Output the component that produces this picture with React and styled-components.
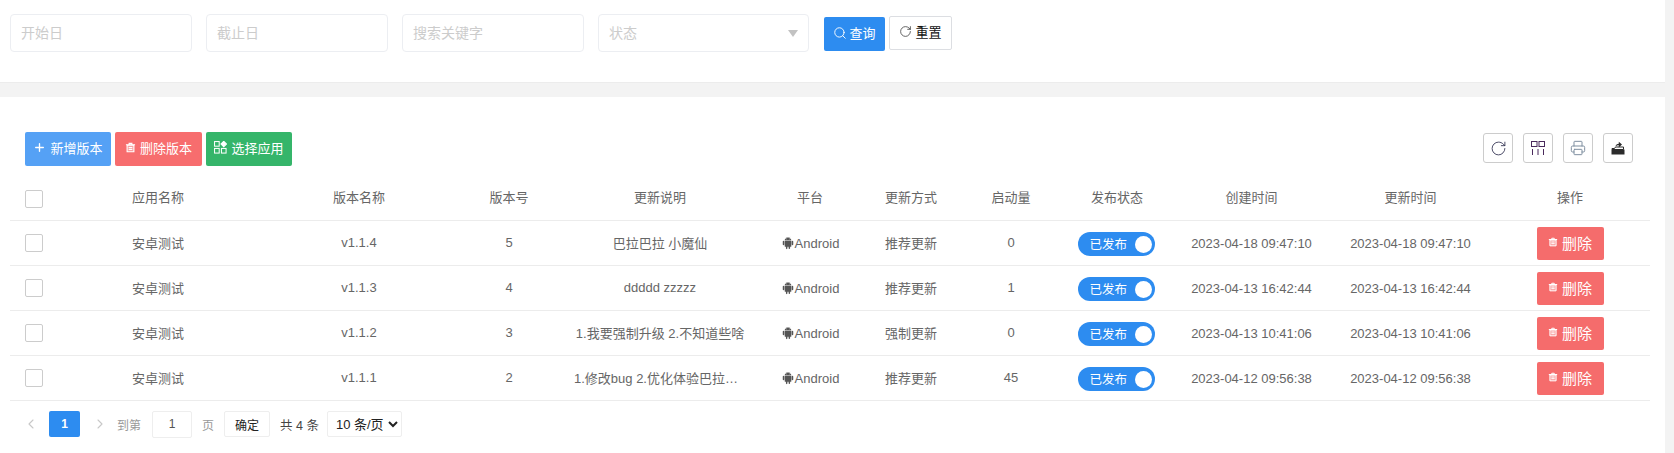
import React from "react";
import styled, { createGlobalStyle } from "styled-components";
import { AiFillAndroid } from "react-icons/ai";
import { Plus, RotateCw, Search, Printer, ChevronLeft, ChevronRight } from "lucide-react";

const GlobalStyle = createGlobalStyle`
  html, body {
    margin: 0;
    padding: 0;
    overflow: hidden;
    background: #f3f3f3;
    font-family: "Liberation Sans", "Noto Sans CJK SC", sans-serif;
    font-size: 13px;
    color: #666;
  }
  * { box-sizing: border-box; }
`;

const Page = styled.div`
  height: 453px;
  padding-right: 9px;
  overflow: hidden;
`;

const FilterPanel = styled.div`
  display: flex;
  align-items: flex-start;
  height: 83px;
  padding: 14px 10px 0;
  background: #fff;
  border-bottom: 1px solid #ececec;
`;

const FilterInput = styled.input`
  width: 182px;
  height: 38px;
  margin-right: 14px;
  padding: 0 10px;
  border: 1px solid #eceef2;
  border-radius: 4px;
  outline: none;
  font: 14px "Liberation Sans", "Noto Sans CJK SC", sans-serif;
  &::placeholder { color: #ccc; }
`;

const StatusSelect = styled.div`
  display: flex;
  align-items: center;
  justify-content: space-between;
  width: 211px;
  height: 38px;
  margin-right: 15px;
  padding: 0 10px 2px;
  border: 1px solid #eceef2;
  border-radius: 4px;
  font-size: 14px;
  color: #ccc;
`;

const Caret = styled.span`
  width: 0;
  height: 0;
  margin-top: 2px;
  border-left: 5.5px solid transparent;
  border-right: 5.5px solid transparent;
  border-top: 7px solid #c2c2c2;
`;

const QueryButton = styled.button`
  display: flex;
  align-items: center;
  justify-content: center;
  gap: 2px;
  width: 61px;
  height: 34px;
  margin: 3px 4px 0 0;
  padding: 0 0 3px;
  border: 0;
  border-radius: 2px;
  background: #2d8cf0;
  color: #fff;
  font: 13px "Liberation Sans", "Noto Sans CJK SC", sans-serif;
`;

const ResetButton = styled.button`
  display: flex;
  align-items: center;
  justify-content: center;
  gap: 3px;
  width: 63px;
  height: 34px;
  margin-top: 2px;
  padding: 0 0 3px;
  border: 1px solid #dcdee2;
  border-radius: 2px;
  background: #fff;
  color: #111;
  font: 13px "Liberation Sans", "Noto Sans CJK SC", sans-serif;
`;

const TablePanel = styled.div`
  height: 356px;
  margin-top: 14px;
  padding: 35px 15px 0 10px;
  background: #fff;
`;

const Toolbar = styled.div`
  display: flex;
  justify-content: space-between;
  padding: 0 17px 0 15px;
`;

const ActionGroup = styled.div`
  display: flex;
  gap: 4px;
`;

const ActionButton = styled.button`
  display: flex;
  align-items: center;
  justify-content: center;
  gap: 4px;
  width: ${(p) => p.$width}px;
  height: 34px;
  padding: 0 0 3px;
  border: 0;
  border-radius: 2px;
  background: ${(p) => p.$color};
  color: #fff;
  font: 13px "Liberation Sans", "Noto Sans CJK SC", sans-serif;
`;

const ToolGroup = styled.div`
  display: flex;
  gap: 10px;
  padding-top: 1px;
`;

const ToolButton = styled.button`
  display: flex;
  align-items: center;
  justify-content: center;
  width: 30px;
  height: 30px;
  padding: 0;
  border: 1px solid #ccc;
  border-radius: 3px;
  background: #fff;
  color: ${(p) => p.$color || "#333"};
`;

const columns = "48px 200px 202px 98px 204px 96px 106px 94px 118px 151px 167px 152px";

const Row = styled.div`
  display: grid;
  grid-template-columns: ${columns};
  align-items: center;
  height: 45px;
  padding-right: 4px;
  border-bottom: 1px solid #ececec;
  text-align: center;
  color: #666;
`;

const HeadRow = styled(Row)`
  height: 55px;
  padding-top: 12px;
`;

const CheckCell = styled.div`
  padding-left: 15px;
`;

const Checkbox = styled.span`
  display: block;
  width: 18px;
  height: 18px;
  border: 1px solid #ccc;
  border-radius: 2px;
  background: #fff;
`;

const Cell = styled.div`
  padding: 0 16px 2px;
  white-space: nowrap;
  overflow: hidden;
  text-overflow: ellipsis;
`;

const HeadCell = styled(Cell)`
  padding-bottom: 5px;
`;

const DateCell = styled.div`
  white-space: nowrap;
`;

const Platform = styled.div`
  display: flex;
  align-items: center;
  justify-content: center;
  color: #666;
`;

const SwitchCell = styled.div`
  display: flex;
  justify-content: center;
  padding-right: 2px;
`;

const Toggle = styled.div`
  display: flex;
  align-items: center;
  justify-content: space-between;
  width: 77px;
  height: 24px;
  margin-top: 2px;
  padding: 0 3px 0 12px;
  border-radius: 12px;
  background: #2d8cf0;
  color: #fff;
  font-size: 12.5px;
`;

const ToggleLabel = styled.span`
  padding-bottom: 2px;
`;

const Knob = styled.span`
  width: 17px;
  height: 17px;
  border-radius: 50%;
  background: #fff;
`;

const OpCell = styled.div`
  display: flex;
  justify-content: center;
`;

const DeleteButton = styled.button`
  display: flex;
  align-items: center;
  justify-content: center;
  gap: 4px;
  width: 67px;
  height: 33px;
  padding: 0 0 2px;
  border: 0;
  border-radius: 2px;
  background: #f56c6c;
  color: #fff;
  font: 15px "Liberation Sans", "Noto Sans CJK SC", sans-serif;
`;

const Pager = styled.div`
  display: flex;
  align-items: center;
  height: 26px;
  margin-top: 10px;
  padding-left: 13px;
  font-size: 12px;
  color: #999;
`;

const PageArrow = styled.span`
  display: flex;
  justify-content: center;
  width: 16px;
  color: #c8c8c8;
  margin: ${(p) => p.$margin};
`;

const PageNumber = styled.span`
  display: flex;
  align-items: center;
  justify-content: center;
  width: 31px;
  height: 26px;
  border-radius: 2px;
  background: #2d8cf0;
  color: #fff;
  font-weight: bold;
`;

const PagerText = styled.span`
  color: ${(p) => p.$color || "#999"};
  font-size: ${(p) => p.$size || 12}px;
`;

const PageInput = styled.input`
  width: 40px;
  height: 27px;
  margin: 0 10px 0 11px;
  border: 1px solid #eee;
  border-radius: 2px;
  outline: none;
  text-align: center;
  color: #555;
  font: 12px "Liberation Sans", "Noto Sans CJK SC", sans-serif;
`;

const ConfirmButton = styled.button`
  width: 46px;
  height: 26px;
  margin: 0 10px;
  padding: 0;
  border: 1px solid #eee;
  border-radius: 2px;
  background: #fff;
  color: #222;
  font: 12px "Liberation Sans", "Noto Sans CJK SC", sans-serif;
`;

const SizeSelect = styled.select`
  width: 75px;
  height: 26px;
  margin-left: 8px;
  padding: 0 0 0 4px;
  border: 1px solid #eee;
  border-radius: 2px;
  outline: none;
  background: #fff;
  color: #222;
  font: 13px "Liberation Sans", "Noto Sans CJK SC", sans-serif;
`;

const TrashIcon = ({ size = 12 }) => (
  <svg width={size} height={size} viewBox="0 0 12 12" fill="none" stroke="currentColor" strokeWidth="1.2">
    <path d="M1 3h10M4.500 3V1.500h3V3" />
    <path d="M2.300 3.600h7.400v7H2.300z" fill="currentColor" fillOpacity="0.35" />
    <path d="M4 6h4M4 8h4" />
  </svg>
);

const AppsIcon = () => (
  <svg width="13" height="13" viewBox="0 0 14 14" fill="none" stroke="currentColor" strokeWidth="1.1">
    <rect x="0.600" y="0.600" width="5" height="5" />
    <rect x="0.600" y="8" width="5" height="5" />
    <rect x="8" y="8" width="5" height="5" />
    <path d="M10.500 0.300l3 3-3 3-3-3z" fill="currentColor" />
  </svg>
);

const ColumnsIcon = () => (
  <svg width="14" height="14" viewBox="0 0 14 14" fill="none" stroke="#4a2a5c" strokeWidth="1">
    <rect x="0.500" y="0.500" width="5.500" height="5" />
    <rect x="8" y="0.500" width="5.500" height="5" />
    <path d="M1.500 8v6M7 8v6M12.500 8v6" />
  </svg>
);

const ExportIcon = () => (
  <svg width="14" height="14" viewBox="0 0 14 14">
    <path d="M1 7.500h2.500l1-1.500h8v2.500H1z" fill="none" stroke="#2b2b2b" strokeWidth="1" />
    <path d="M0.500 8.500h13v5h-13z" fill="#2b2b2b" />
    <path d="M4.500 5.500C4.800 3.800 6 2.900 7.800 2.800V0.800l3.200 2.800-3.200 2.800V4.300C6.400 4.300 5.400 4.700 4.500 5.500z" fill="#2b2b2b" />
  </svg>
);

const rows = [
  { name: "v1.1.4", no: 5, note: "巴拉巴拉 小魔仙", mode: "推荐更新", count: 0, time: "2023-04-18 09:47:10" },
  { name: "v1.1.3", no: 4, note: "ddddd zzzzz", mode: "推荐更新", count: 1, time: "2023-04-13 16:42:44" },
  { name: "v1.1.2", no: 3, note: "1.我要强制升级 2.不知道些啥", mode: "强制更新", count: 0, time: "2023-04-13 10:41:06" },
  { name: "v1.1.1", no: 2, note: "1.修改bug 2.优化体验巴拉巴拉巴拉", mode: "推荐更新", count: 45, time: "2023-04-12 09:56:38" },
];

const heads = ["应用名称", "版本名称", "版本号", "更新说明", "平台", "更新方式", "启动量", "发布状态", "创建时间", "更新时间", "操作"];

export default function App() {
  return (
    <Page>
      <GlobalStyle />
      <FilterPanel>
        <FilterInput placeholder="开始日" />
        <FilterInput placeholder="截止日" />
        <FilterInput placeholder="搜索关键字" />
        <StatusSelect>
          状态
          <Caret />
        </StatusSelect>
        <QueryButton>
          <Search size={14} strokeWidth={1.6} />
          查询
        </QueryButton>
        <ResetButton>
          <RotateCw size={13} strokeWidth={1.5} color="#444" />
          重置
        </ResetButton>
      </FilterPanel>

      <TablePanel>
        <Toolbar>
          <ActionGroup>
            <ActionButton $width={86} $color="#55a1f5">
              <Plus size={13} strokeWidth={2.5} />
              新增版本
            </ActionButton>
            <ActionButton $width={87} $color="#f76d6e">
              <TrashIcon size={11} />
              删除版本
            </ActionButton>
            <ActionButton $width={86} $color="#35b56a">
              <AppsIcon />
              选择应用
            </ActionButton>
          </ActionGroup>
          <ToolGroup>
            <ToolButton><RotateCw size={17} strokeWidth={1.2} color="#2f2f4f" /></ToolButton>
            <ToolButton><ColumnsIcon /></ToolButton>
            <ToolButton $color="#7f8fa0"><Printer size={16} strokeWidth={1.5} /></ToolButton>
            <ToolButton><ExportIcon /></ToolButton>
          </ToolGroup>
        </Toolbar>

        <HeadRow>
          <CheckCell><Checkbox /></CheckCell>
          {heads.map((h) => (
            <HeadCell key={h}>{h}</HeadCell>
          ))}
        </HeadRow>

        {rows.map((r) => (
          <Row key={r.name}>
            <CheckCell><Checkbox /></CheckCell>
            <Cell>安卓测试</Cell>
            <Cell>{r.name}</Cell>
            <Cell>{r.no}</Cell>
            <Cell>{r.note}</Cell>
            <Platform><AiFillAndroid size={14} color="#555" />Android</Platform>
            <Cell>{r.mode}</Cell>
            <Cell>{r.count}</Cell>
            <SwitchCell>
              <Toggle><ToggleLabel>已发布</ToggleLabel><Knob /></Toggle>
            </SwitchCell>
            <DateCell>{r.time}</DateCell>
            <DateCell>{r.time}</DateCell>
            <OpCell>
              <DeleteButton>
                <TrashIcon size={10} />
                删除
              </DeleteButton>
            </OpCell>
          </Row>
        ))}

        <Pager>
          <PageArrow $margin="0 10px 0 0"><ChevronLeft size={22} strokeWidth={1.6} /></PageArrow>
          <PageNumber>1</PageNumber>
          <PageArrow $margin="0 9px 0 12px"><ChevronRight size={22} strokeWidth={1.6} /></PageArrow>
          <PagerText>到第</PagerText>
          <PageInput defaultValue="1" />
          <PagerText>页</PagerText>
          <ConfirmButton>确定</ConfirmButton>
          <PagerText $color="#444" $size={12.5}>共 4 条</PagerText>
          <SizeSelect defaultValue="10">
            <option value="10">10 条/页</option>
            <option value="20">20 条/页</option>
          </SizeSelect>
        </Pager>
      </TablePanel>
    </Page>
  );
}
